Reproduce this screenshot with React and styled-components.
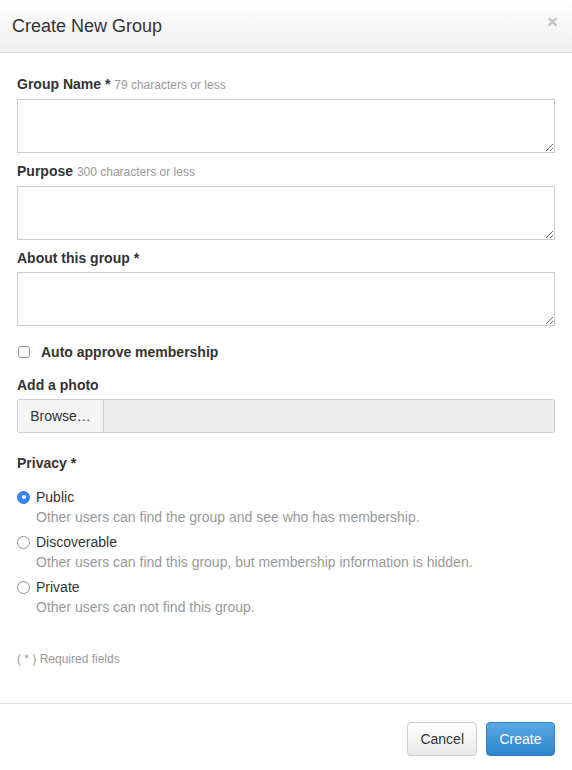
import React from 'react';
import styled, { createGlobalStyle } from 'styled-components';

const GlobalStyle = createGlobalStyle`
  html, body {
    margin: 0;
    padding: 0;
    background: #fff;
    font-family: "Liberation Sans", Arial, Helvetica, sans-serif;
    color: #333;
  }
  * { box-sizing: border-box; }
`;

const Modal = styled.div`
  width: 572px;
  height: 770px;
  background: #fff;
  display: flex;
  flex-direction: column;
  overflow: hidden;
`;

const Header = styled.div`
  height: 53px;
  flex: none;
  display: flex;
  align-items: center;
  justify-content: space-between;
  padding: 0 14px 0 12px;
  background: linear-gradient(to bottom, #ffffff 0%, #f0f0f0 100%);
  border-bottom: 1px solid #ddd;
`;

const Title = styled.h3`
  margin: 0;
  font-size: 18px;
  font-weight: normal;
  color: #333;
  line-height: 20px;
`;

const Close = styled.span`
  font-size: 19px;
  font-weight: bold;
  color: #c4c4c4;
  line-height: 1;
  margin-top: -10px;
`;

const Body = styled.div`
  padding: 21px 17px 35px;
  display: flex;
  flex-direction: column;
`;

const Group = styled.div`
  margin-bottom: ${p => p.$mb || 8}px;
`;

const Label = styled.div`
  font-size: 14px;
  font-weight: bold;
  line-height: 20px;
  color: #333;
  margin-bottom: 4px;
`;

const Hint = styled.span`
  font-size: 12px;
  font-weight: normal;
  color: #999;
`;

const TextArea = styled.textarea`
  display: block;
  width: 538px;
  height: 54px;
  border: 1px solid #ccc;
  border-radius: 0;
  padding: 6px;
  font-family: inherit;
  font-size: 14px;
  margin: 0;
`;

const CheckRow = styled.label`
  display: flex;
  align-items: center;
  height: 20px;
  font-size: 14px;
  font-weight: bold;
  color: #333;
  margin-bottom: 13px;
`;

const Box = styled.span`
  width: 12px;
  height: 12px;
  border: 1px solid #8f8f8f;
  border-radius: 3px;
  background: #fff;
  margin: 0 11px 0 1px;
`;

const FileInput = styled.div`
  display: flex;
  height: 34px;
  width: 538px;
  border: 1px solid #ccc;
  border-radius: 3px;
  background: #eee;
  overflow: hidden;
`;

const Browse = styled.div`
  width: 86px;
  display: flex;
  align-items: center;
  justify-content: center;
  font-size: 14px;
  color: #333;
  background: #f5f5f5;
  border-right: 1px solid #ccc;
`;

const RadioList = styled.div`
  display: flex;
  flex-direction: column;
  gap: 5px;
  margin-top: 10px;
`;

const RadioRow = styled.div`
  display: flex;
  flex-direction: column;
`;

const RadioLabel = styled.div`
  display: flex;
  align-items: center;
  font-size: 14px;
  line-height: 20px;
  color: #333;
`;

const Radio = styled.span`
  width: 13px;
  height: 13px;
  border-radius: 50%;
  margin-right: 6px;
  flex: none;
  display: flex;
  align-items: center;
  justify-content: center;
  background: ${p => (p.$on ? '#3b82f6' : '#fff')};
  border: 1px solid ${p => (p.$on ? '#3478f0' : '#8f8f8f')};
  &::after {
    content: '';
    width: 4px;
    height: 4px;
    border-radius: 50%;
    background: #fff;
    display: ${p => (p.$on ? 'block' : 'none')};
  }
`;

const Desc = styled.div`
  font-size: 14px;
  line-height: 20px;
  color: #999;
  padding-left: 19px;
`;

const Required = styled.div`
  margin-top: 34px;
  font-size: 12px;
  line-height: 17px;
  color: #999;
`;

const Footer = styled.div`
  border-top: 1px solid #e0e0e0;
  padding: 18px 17px 0;
  display: flex;
  justify-content: flex-end;
  gap: 9px;
`;

const Button = styled.button`
  height: 34px;
  min-width: 69px;
  padding: 0 12px;
  font-family: inherit;
  font-size: 14px;
  border-radius: 4px;
  cursor: pointer;
  color: ${p => (p.$primary ? '#fff' : '#333')};
  background: ${p =>
    p.$primary
      ? 'linear-gradient(to bottom, #5ca9e4 0%, #2c84cd 100%)'
      : 'linear-gradient(to bottom, #ffffff 0%, #e8e8e8 100%)'};
  border: 1px solid ${p => (p.$primary ? '#2f81c7' : '#ccc')};
`;

const options = [
  { name: 'Public', desc: 'Other users can find the group and see who has membership.', on: true },
  { name: 'Discoverable', desc: 'Other users can find this group, but membership information is hidden.' },
  { name: 'Private', desc: 'Other users can not find this group.' },
];

export default function App() {
  return (
    <>
      <GlobalStyle />
      <Modal>
        <Header>
          <Title>Create New Group</Title>
          <Close>×</Close>
        </Header>
        <Body>
          <Group>
            <Label>Group Name * <Hint>79 characters or less</Hint></Label>
            <TextArea />
          </Group>
          <Group>
            <Label>Purpose <Hint>300 characters or less</Hint></Label>
            <TextArea />
          </Group>
          <Group $mb={16}>
            <Label>About this group *</Label>
            <TextArea />
          </Group>
          <CheckRow>
            <Box />
            Auto approve membership
          </CheckRow>
          <Group $mb={20}>
            <Label>Add a photo</Label>
            <FileInput>
              <Browse>Browse…</Browse>
            </FileInput>
          </Group>
          <Label>Privacy *</Label>
          <RadioList>
            {options.map(o => (
              <RadioRow key={o.name}>
                <RadioLabel>
                  <Radio $on={o.on} />
                  {o.name}
                </RadioLabel>
                <Desc>{o.desc}</Desc>
              </RadioRow>
            ))}
          </RadioList>
          <Required>( * ) Required fields</Required>
        </Body>
        <Footer>
          <Button>Cancel</Button>
          <Button $primary>Create</Button>
        </Footer>
      </Modal>
    </>
  );
}
